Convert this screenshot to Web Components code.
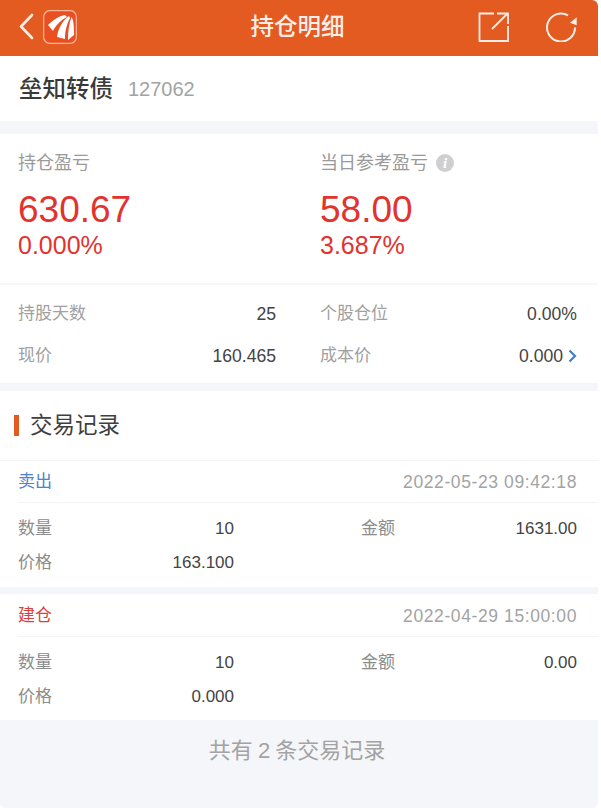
<!DOCTYPE html>
<html lang="zh">
<head>
<meta charset="utf-8">
<title>持仓明细</title>
<style>
  html, body { margin: 0; padding: 0; background: #ffffff; }
  body {
    width: 598px;
    height: 808px;
    overflow: hidden;
    font-family: "Liberation Sans", "Noto Sans CJK SC", sans-serif;
    border-radius: 0 6px 6px 6px;
  }
</style>
</head>
<body>
<app-page>
  <nav-bar>持仓明细</nav-bar>
  <stock-title code="127062">垒知转债</stock-title>
  <profit-summary></profit-summary>
  <stat-grid></stat-grid>
  <section-title>交易记录</section-title>
  <trade-card type="卖出" kind="sell" date="2022-05-23 09:42:18" qty="10" amount="1631.00" price="163.100"></trade-card>
  <trade-card type="建仓" kind="open" date="2022-04-29 15:00:00" qty="10" amount="0.00" price="0.000" last></trade-card>
  <list-footer>共有 2 条交易记录</list-footer>
</app-page>

<script>
  const FONT = '"Liberation Sans", "Noto Sans CJK SC", sans-serif';

  class AppPage extends HTMLElement {
    constructor() {
      super();
      this.attachShadow( {mode: 'open'} ).innerHTML = `
        <style>
          :host {
            background: #f5f6f9;
            display: flex;
            flex-direction: column;
            font-family: ${FONT};
            height: 808px;
          }
        </style>
        <slot></slot>
      `;
    }
  }

  class NavBar extends HTMLElement {
    constructor() {
      super();
      this.attachShadow( {mode: 'open'} ).innerHTML = `
        <style>
          :host {
            align-items: center;
            background: #e35b20;
            box-sizing: border-box;
            color: #fbeee8;
            display: flex;
            flex: none;
            height: 56px;
            padding: 0 21px 3px 18px;
          }
          .left { align-items: center; display: flex; gap: 9px; width: 160px; }
          .title { flex: 1; font-size: 23.5px; font-weight: 500; line-height: 30px; text-align: center; }
          .right { align-items: center; display: flex; gap: 35px; justify-content: flex-end; width: 160px; }
          svg { display: block; }
        </style>
        <div class="left">
          <svg width="16" height="28" viewBox="0 0 16 28" fill="none" stroke="#fbeee8" stroke-width="2.6" stroke-linecap="round" stroke-linejoin="round">
            <path d="M14 2 L3 13.5 L14 25"/>
          </svg>
          <svg width="34" height="34" viewBox="0 0 34 34">
            <rect x="0.7" y="0.7" width="32.6" height="32.6" rx="6" fill="#ea4f22" stroke="#f6b79c" stroke-width="1.2"/>
            <path d="M5 15 C10 10 16 6 22 5 L24 7 C18 10 13 15 10 21 Z" fill="#fff"/>
            <path d="M14 27 C15 19 19 11 26 6 L27 8 C24 14 22 20 22 29 Z" fill="#fff"/>
            <path d="M25 30 C25 21 26 14 28.5 7 L30 10 C31 15 31 21 31 25 Z" fill="#fff"/>
          </svg>
        </div>
        <div class="title"><slot></slot></div>
        <div class="right">
          <svg width="31" height="30" viewBox="0 0 31 30" fill="none" stroke="#fbeee8" stroke-width="1.8">
            <path d="M16 1.5 H1.5 V29 H30 V14"/>
            <path d="M14 17 L29 2 M19 1.5 H30 V12"/>
          </svg>
          <svg width="33" height="30" viewBox="0 0 33 30" fill="none">
            <path d="M31 15.5 A14 14 0 1 1 24 3.4" stroke="#fbeee8" stroke-width="2"/>
            <path d="M32.7 5.2 L32.7 13.2 L26 10.8 Z" fill="#fbeee8"/>
          </svg>
        </div>
      `;
    }
  }

  class StockTitle extends HTMLElement {
    constructor() {
      super();
      this.attachShadow( {mode: 'open'} ).innerHTML = `
        <style>
          :host {
            align-items: center;
            background: #ffffff;
            box-sizing: border-box;
            display: flex;
            flex: none;
            gap: 15px;
            height: 65px;
            line-height: 28px;
            margin-bottom: 13px;
            padding: 0 18px 0 19px;
          }
          .name { color: #3a3a3a; font-size: 23.5px; font-weight: 500; }
          .code { color: #a3a3a3; font-size: 20px; }
        </style>
        <span class="name"><slot></slot></span>
        <span class="code"></span>
      `;
      this.shadowRoot.querySelector( '.code' ).textContent = this.getAttribute( 'code' );
    }
  }

  class ProfitCell extends HTMLElement {
    constructor() {
      super();
      this.attachShadow( {mode: 'open'} ).innerHTML = `
        <style>
          :host { display: block; }
          .label { align-items: center; color: #9a9a9a; display: flex; font-size: 18px; gap: 8px; height: 24px; line-height: 24px; }
          .value { color: #e2332f; font-size: 37px; height: 42px; line-height: 42px; margin-top: 14px; }
          .pct { color: #e2332f; font-size: 25px; height: 28px; line-height: 28px; }
          .info {
            background: #cfcfd1;
            border-radius: 50%;
            color: #ffffff;
            display: none;
            font-family: "Liberation Serif", serif;
            font-size: 15px;
            font-style: italic;
            font-weight: 700;
            height: 18px;
            line-height: 18px;
            text-align: center;
            width: 18px;
          }
          :host( [info] ) .info { display: block; }
        </style>
        <div class="label"><slot></slot><span class="info">i</span></div>
        <div class="value"></div>
        <div class="pct"></div>
      `;
      this.shadowRoot.querySelector( '.value' ).textContent = this.getAttribute( 'value' );
      this.shadowRoot.querySelector( '.pct' ).textContent = this.getAttribute( 'pct' );
    }
  }

  class ProfitSummary extends HTMLElement {
    constructor() {
      super();
      this.attachShadow( {mode: 'open'} ).innerHTML = `
        <style>
          :host {
            background: #ffffff;
            border-bottom: 2px solid #f8f8fa;
            box-sizing: border-box;
            display: grid;
            flex: none;
            grid-template-columns: 302px 1fr;
            height: 151px;
            padding: 17px 18px 0;
          }
        </style>
        <profit-cell value="630.67" pct="0.000%">持仓盈亏</profit-cell>
        <profit-cell value="58.00" pct="3.687%" info>当日参考盈亏</profit-cell>
      `;
    }
  }

  class StatRow extends HTMLElement {
    constructor() {
      super();
      this.attachShadow( {mode: 'open'} ).innerHTML = `
        <style>
          :host {
            align-items: center;
            box-sizing: border-box;
            display: flex;
            font-size: 17px;
            height: 42px;
            justify-content: space-between;
            line-height: 20px;
            padding-top: 2px;
          }
          .k { color: #a0a0a0; }
          .v { align-items: center; color: #444444; display: flex; font-size: 17.6px; gap: 5px; }
          svg { display: none; }
          :host( [more] ) svg { display: block; }
        </style>
        <span class="k"></span>
        <span class="v"><span class="n"></span>
          <svg width="9" height="14" viewBox="0 0 9 14" fill="none" stroke="#3f7fd0" stroke-width="2.2"><path d="M1.5 1.5 L7 7 L1.5 12.5"/></svg>
        </span>
      `;
      this.shadowRoot.querySelector( '.k' ).textContent = this.getAttribute( 'k' );
      this.shadowRoot.querySelector( '.n' ).textContent = this.getAttribute( 'v' );
    }
  }

  class StatGrid extends HTMLElement {
    constructor() {
      super();
      this.attachShadow( {mode: 'open'} ).innerHTML = `
        <style>
          :host {
            align-content: start;
            background: #ffffff;
            box-sizing: border-box;
            column-gap: 44px;
            display: grid;
            flex: none;
            grid-template-columns: 258px 1fr;
            height: 98px;
            margin-bottom: 8px;
            padding: 7px 21px 0 18px;
          }
        </style>
        <stat-row k="持股天数" v="25"></stat-row>
        <stat-row k="个股仓位" v="0.00%"></stat-row>
        <stat-row k="现价" v="160.465"></stat-row>
        <stat-row k="成本价" v="0.000" more></stat-row>
      `;
    }
  }

  class SectionTitle extends HTMLElement {
    constructor() {
      super();
      this.attachShadow( {mode: 'open'} ).innerHTML = `
        <style>
          :host {
            align-items: center;
            background: #ffffff;
            border-bottom: 1px solid #f3f3f5;
            box-sizing: border-box;
            color: #3f3f3f;
            display: flex;
            flex: none;
            font-size: 22.5px;
            gap: 11px;
            height: 70px;
            line-height: 28px;
            padding-left: 14px;
          }
          i { background: #e35b20; display: block; height: 21px; width: 5px; }
        </style>
        <i></i><slot></slot>
      `;
    }
  }

  class TradeCard extends HTMLElement {
    constructor() {
      super();
      const attr = name => this.getAttribute( name );
      this.attachShadow( {mode: 'open'} ).innerHTML = `
        <style>
          :host {
            background: #ffffff;
            display: block;
            flex: none;
            font-size: 17px;
            height: 126px;
            line-height: 20px;
            margin-bottom: 7px;
            padding-left: 18px;
          }
          :host( [last] ) { margin-bottom: 0; }
          .head {
            align-items: center;
            border-bottom: 1px solid #f3f3f5;
            box-sizing: content-box;
            display: flex;
            height: 40px;
            justify-content: space-between;
            padding: 1px 21px 0 0;
          }
          :host( [last] ) .head { height: 41px; }
          .type { color: #4a84d2; }
          :host( [kind=open] ) .type { color: #d9403c; }
          .date { color: #a3a3a3; font-size: 17.5px; letter-spacing: 0.6px; }
          .body {
            align-items: center;
            color: #444444;
            display: grid;
            grid-auto-rows: 34px;
            grid-template-columns: 216px 127px 1fr;
            padding: 9px 21px 0 0;
          }
          .pair { display: flex; justify-content: space-between; }
          .k { color: #8c8c8c; }
          .r { text-align: right; }
        </style>
        <div class="head">
          <span class="type">${attr( 'type' )}</span>
          <span class="date">${attr( 'date' )}</span>
        </div>
        <div class="body">
          <div class="pair"><span class="k">数量</span><span>${attr( 'qty' )}</span></div>
          <div class="k" style="padding-left:127px;width:0;white-space:nowrap">金额</div>
          <div class="r">${attr( 'amount' )}</div>
          <div class="pair"><span class="k">价格</span><span>${attr( 'price' )}</span></div>
        </div>
      `;
    }
  }

  class ListFooter extends HTMLElement {
    constructor() {
      super();
      this.attachShadow( {mode: 'open'} ).innerHTML = `
        <style>
          :host {
            background: #f5f6f9;
            box-sizing: border-box;
            color: #a3a3a3;
            display: block;
            flex: 1;
            font-size: 22px;
            line-height: 62px;
            padding-right: 4px;
            text-align: center;
            word-spacing: -1px;
          }
        </style>
        <slot></slot>
      `;
    }
  }

  window.customElements.define( 'app-page', AppPage );
  window.customElements.define( 'nav-bar', NavBar );
  window.customElements.define( 'stock-title', StockTitle );
  window.customElements.define( 'profit-cell', ProfitCell );
  window.customElements.define( 'profit-summary', ProfitSummary );
  window.customElements.define( 'stat-row', StatRow );
  window.customElements.define( 'stat-grid', StatGrid );
  window.customElements.define( 'section-title', SectionTitle );
  window.customElements.define( 'trade-card', TradeCard );
  window.customElements.define( 'list-footer', ListFooter );
</script>
</body>
</html>
